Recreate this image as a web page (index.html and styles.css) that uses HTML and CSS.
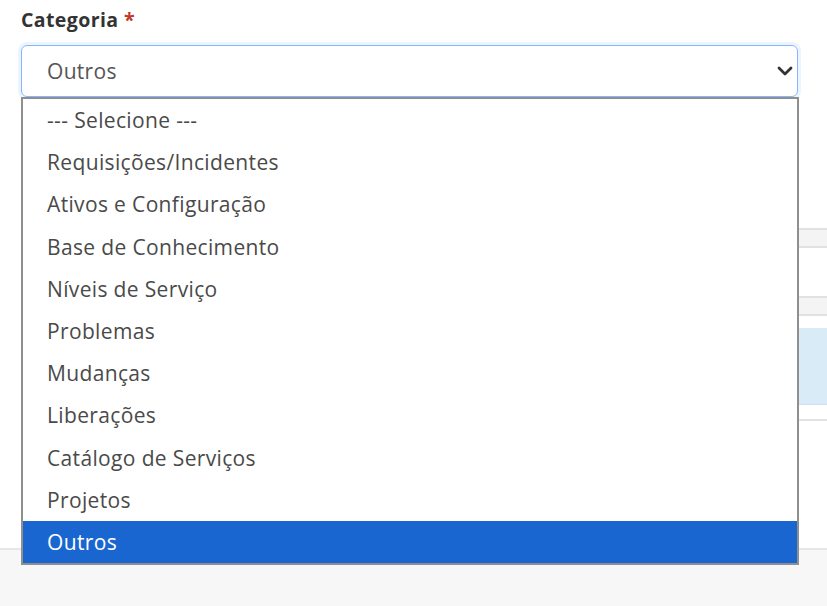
FILE: index.html
```html
<!DOCTYPE html>
<html lang="pt-BR">
<head>
    <meta charset="UTF-8">
    <title>Categoria</title>
    <link rel="stylesheet" href="styles.css">
</head>
<body>
    <div class="page">
        <div class="field">
            <label class="field-label">Categoria <span class="required">*</span></label>
            <div class="select-box">
                <span class="select-value">Outros</span>
                <svg class="chevron" width="16" height="10" viewBox="0 0 16 10">
                    <path d="M2 2 L8 8 L14 2" fill="none" stroke="#333" stroke-width="2.8" stroke-linecap="round" stroke-linejoin="round"/>
                </svg>
            </div>
        </div>

        <div class="form-body">
            <div class="panel-head head-a"></div>
            <div class="panel-head head-b"></div>
            <div class="info-box"></div>
            <div class="divider"></div>
        </div>

        <div class="footer"></div>

        <ul class="options">
            <li class="option">--- Selecione ---</li>
            <li class="option">Requisições/Incidentes</li>
            <li class="option">Ativos e Configuração</li>
            <li class="option">Base de Conhecimento</li>
            <li class="option">Níveis de Serviço</li>
            <li class="option">Problemas</li>
            <li class="option">Mudanças</li>
            <li class="option">Liberações</li>
            <li class="option">Catálogo de Serviços</li>
            <li class="option">Projetos</li>
            <li class="option selected">Outros</li>
        </ul>
    </div>
</body>
</html>
```

FILE: styles.css
```css
body {
    margin: 0;
    font-family: "Open Sans", "Noto Sans", sans-serif;
    background: #ffffff;
    color: #444;
    overflow: hidden;
}

.page {
    position: relative;
    height: 606px;
    display: flex;
    flex-direction: column;
}

.field {
    padding: 6px 0 0 21px;
    width: 777px;
}

.field-label {
    display: block;
    font-size: 19.5px;
    font-weight: 700;
    letter-spacing: 0.4px;
    color: #333;
    line-height: 28px;
    margin-bottom: 11px;
}

.required {
    color: #c0392b;
}

.select-box {
    height: 50px;
    border: 1px solid #86b7fe;
    border-radius: 6px;
    box-shadow: 0 0 0 3px rgba(13, 110, 253, 0.08);
    display: flex;
    align-items: center;
    justify-content: space-between;
    padding: 0 4px 0 25px;
}

.select-value {
    font-size: 21px;
    letter-spacing: 0.3px;
    color: #555;
}

.form-body {
    flex: 1;
    padding: 131px 0 0 60px;
}

.panel-head {
    height: 16px;
    background: #f4f4f4;
    border-top: 2px solid #e2e2e2;
    border-bottom: 2px solid #e2e2e2;
}

.head-a {
    margin-bottom: 48px;
}

.head-b {
    margin-bottom: 12px;
}

.info-box {
    height: 76px;
    background: #d9ebf6;
    border-bottom: 1px solid #cde3f1;
    margin-bottom: 14px;
}

.divider {
    height: 2px;
    background: #e2e2e2;
}

.footer {
    height: 56px;
    background: #f7f7f7;
    border-top: 2px solid #e6e6e6;
}

.options {
    position: absolute;
    top: 97px;
    left: 21px;
    width: 774px;
    margin: 0;
    padding: 0;
    list-style: none;
    background: #fff;
    border: 2px solid #8f8f8f;
}

.option {
    height: 42.2px;
    line-height: 42px;
    padding-left: 24px;
    font-size: 21px;
    letter-spacing: 0.35px;
    color: #4a4a4a;
}

.selected {
    background: #1a66d0;
    color: #fff;
}
```
